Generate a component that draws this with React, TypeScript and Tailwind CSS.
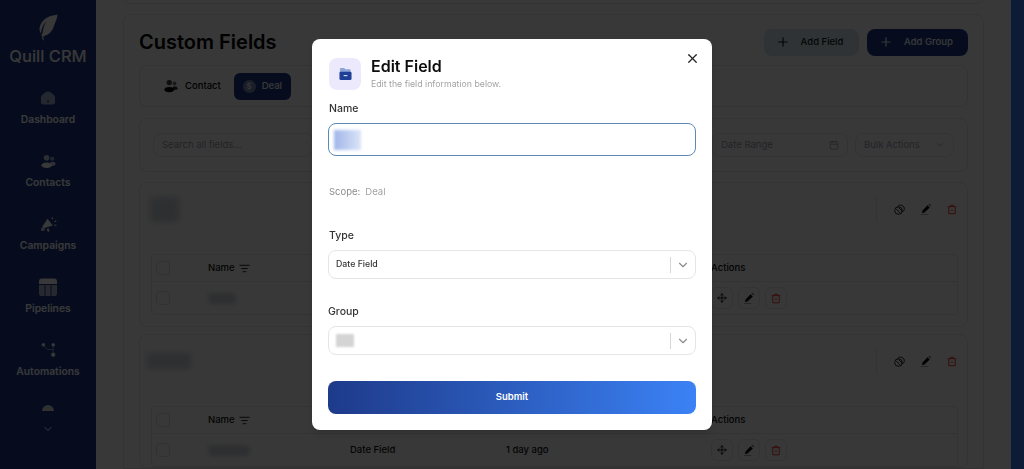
import React from "react";
import { Plus, X, ChevronDown, Calendar, ListFilter, Move } from "lucide-react";

const Feather = () => (
  <svg width="21" height="28" viewBox="0 0 22 28" fill="currentColor">
    <path d="M20.5 1C14 2 8 4 4.500 8.500 1.500 12.500 0.500 17 3 20.500 3.500 16 5.500 11.500 9 7.500 6.500 12 5 17 4.500 21.500 L6 24C8.500 22.500 11 22 13.500 19 15.500 16.500 16.500 14 17.500 10.500 19 8 20 4.500 20.500 1Z" />
    <path d="M3.500 21 L5 28 L6 27.800 L5 21Z" />
  </svg>
);
const Home = () => (
  <svg width="14" height="14" viewBox="0 0 14 14" fill="currentColor" className="opacity-60">
    <path d="M7 0.500C9 0.500 14 4 14 6V11.500A2 2 0 0 1 12 13.500H2A2 2 0 0 1 0 11.500V6C0 4 5 0.500 7 0.500Z" />
    <rect x="6.300" y="9.500" width="1.400" height="1.400" fill="#040b22" />
  </svg>
);
const People = ({ s = 15 }: { s?: number }) => (
  <svg width={s} height={s} viewBox="0 0 16 16" fill="currentColor">
    <circle cx="6" cy="4" r="3" opacity="0.75" />
    <circle cx="12" cy="5" r="2.200" opacity="0.55" />
    <ellipse cx="6" cy="12" rx="5.500" ry="3" />
    <ellipse cx="12.500" cy="10.500" rx="3" ry="2.200" opacity="0.8" />
  </svg>
);
const Megaphone = () => (
  <svg width="17" height="17" viewBox="0 0 18 18" fill="currentColor">
    <path d="M8 3 13.500 10 4 13 2.500 11Z" />
    <circle cx="3" cy="14" r="2" opacity="0.8" />
    <path d="M7 14 9 13 10 16 8.500 17Z" />
    <path d="M12 2 13 1 14 3 13 3.500ZM15 5.500 17 4.500 17.500 5.500 15.500 6.500ZM15 9 17.500 9.500 17.300 10.500 15 10Z" />
  </svg>
);
const Board = () => (
  <svg width="18" height="18" viewBox="0 0 18 18" fill="currentColor">
    <path d="M3 0.500H15A3 3 0 0 1 18 3.500V6H0V3.500A3 3 0 0 1 3 0.500Z" />
    <path d="M0 7H5.500V18H2.500A2.500 2.500 0 0 1 0 15.500ZM6.500 7H11.500V18H6.500ZM12.500 7H18V15.500A2.500 2.500 0 0 1 15.500 18H12.500Z" opacity="0.65" />
  </svg>
);
const Flow = () => (
  <svg width="15" height="16" viewBox="0 0 16 16" fill="currentColor" stroke="currentColor" strokeWidth="0.500">
    <circle cx="2.500" cy="2.500" r="1.600" />
    <circle cx="13" cy="2.500" r="1.600" />
    <circle cx="13" cy="13" r="2" />
    <path d="M3 3.500 7 7.500H13M13 3V12" fill="none" />
  </svg>
);
const Orbit = () => (
  <svg width="11" height="11" viewBox="0 0 16 16" fill="none" stroke="currentColor" strokeWidth="1.200">
    <circle cx="6.500" cy="9.500" r="5.500" />
    <path d="M5 4A5.500 5.500 0 0 1 15 8 5 5 0 0 1 11.500 11.500" />
    <path d="M3 7 9 13M6.500 5 11.500 10" />
  </svg>
);
const Pen = () => (
  <svg width="12" height="12" viewBox="0 0 16 16" fill="currentColor">
    <path d="M10 3 13 6 6 12.500 2.500 13.300 3.500 10Z" />
    <path d="M11 2 12.500 0.800 15 3.300 14 4.800Z" opacity="0.5" />
    <rect x="1" y="14.700" width="10" height="1" opacity="0.4" />
  </svg>
);
const Trash = () => (
  <svg width="10" height="11" viewBox="0 0 14 15" fill="none" stroke="#ef2020" strokeWidth="1.200">
    <path d="M1 3.500H13M5 3.500V1.500H9V3.500M2.500 3.500V13.500H11.500V3.500M5.500 8.500H8.500" />
  </svg>
);
const Folder = () => (
  <svg width="13" height="14" viewBox="0 0 14 14">
    <path d="M1 1.500A1 1 0 0 1 2 0.500H5.500L7 2H11.500A1 1 0 0 1 12.500 3V7H1Z" fill="#8ea3d6" />
    <rect x="0.500" y="4.500" width="13" height="9" rx="1.500" fill="#1e3f98" />
    <rect x="5" y="8.300" width="4" height="1" fill="#ffffff" />
  </svg>
);

const NavItem = ({ icon, label }: { icon: React.ReactNode; label: string }) => (
  <div className="flex h-[63px] shrink-0 flex-col items-center justify-start text-white">
    <div className="flex h-[22px] items-center justify-center">{icon}</div>
    <div className="mt-[2px] text-[10.300px] leading-[16px] font-semibold text-white">{label}</div>
  </div>
);

const Actions = () => (
  <div className="flex items-center">
    <div className="mr-[14px] h-[26px] w-px bg-[#e8e8e8]" />
    <div className="flex items-center gap-[11px] text-black">
      <span className="flex w-[16px] justify-center"><Orbit /></span>
      <span className="flex w-[16px] justify-center"><Pen /></span>
      <span className="flex w-[14px] justify-center"><Trash /></span>
    </div>
  </div>
);

const ActionBox = ({ children }: { children: React.ReactNode }) => (
  <div className="flex size-[22px] items-center justify-center rounded-md border border-[#e8e8e8]">{children}</div>
);

const Table = ({ date, blurW }: { date?: string; blurW: number }) => (
  <div className="mr-[9px] ml-[11px] rounded border border-[#e8e8e8] text-[9.500px] text-[#111]">
    <div className="flex h-[27px] items-center border-b border-[#e8e8e8]">
      <div className="ml-[4px] size-[14px] rounded border border-[#e0e0e0]" />
      <div className="ml-[38px] flex w-[142px] items-center gap-[4px] font-medium">
        Name <ListFilter size={11} />
      </div>
      <div className="ml-[361px] font-medium">Actions</div>
    </div>
    <div className="flex h-[32px] items-center">
      <div className="ml-[4px] size-[14px] rounded border border-[#e0e0e0]" />
      <div className="ml-[38px] w-[142px]">
        <div className="h-[11px] rounded-sm bg-gray-300 blur-[2px]" style={{ width: blurW }} />
      </div>
      <div className="w-[156px] font-medium">{date ? "Date Field" : ""}</div>
      <div className="w-[205px] font-medium">{date}</div>
      <div className="flex items-center gap-[5px] text-black">
        <ActionBox><Move size={10} strokeWidth={2} /></ActionBox>
        <ActionBox><Pen /></ActionBox>
        <ActionBox><Trash /></ActionBox>
      </div>
    </div>
  </div>
);

const Filter = ({ children, cls }: { children: React.ReactNode; cls: string }) => (
  <div className={`flex h-[24px] items-center rounded-lg border border-[#e8e8e8] px-2 text-[9.500px] text-gray-400 ${cls}`}>{children}</div>
);

const SelectBox = ({ children }: { children: React.ReactNode }) => (
  <div className="flex h-[29px] items-center rounded-lg border border-[#e5e5e5] bg-white">
    <div className="flex-1 pl-[7px] text-[8.750px] font-medium text-[#333]">{children}</div>
    <div className="h-[16px] w-px bg-[#d6d6d6]" />
    <div className="flex w-[24px] justify-center text-[#8c8c8c]">
      <ChevronDown size={14} />
    </div>
  </div>
);

export default function App() {
  return (
    <div className="relative flex h-screen w-full overflow-hidden bg-white font-['Inter',sans-serif]">
      <aside className="flex w-[96px] shrink-0 flex-col items-center overflow-hidden bg-[#1e3a8a] pt-[13px] text-white">
        <Feather />
        <div className="mt-[6px] text-[16.500px] leading-[18px] font-medium text-white">Quill CRM</div>
        <div className="mt-[22px] flex w-full flex-col">
          <NavItem icon={<Home />} label="Dashboard" />
          <NavItem icon={<People />} label="Contacts" />
          <NavItem icon={<Megaphone />} label="Campaigns" />
          <NavItem icon={<Board />} label="Pipelines" />
          <NavItem icon={<Flow />} label="Automations" />
        </div>
        <div className="mt-[3px] h-[6px] w-[12px] rounded-t-full bg-white/80" />
        <ChevronDown size={12} className="mt-[12px] text-white" />
      </aside>

      <main className="flex min-w-0 flex-1 flex-col overflow-hidden px-[27px]">
        <div className="-mt-[10px] h-[14px] shrink-0 rounded-lg border border-[#e8e8e8]" />
        <section className="mt-[10px] flex flex-1 flex-col rounded-t-lg border border-[#e8e8e8] px-[15px] pt-[13px]">
          <div className="flex h-[28px] items-center justify-between">
            <h1 className="text-[20px] font-semibold text-black">Custom Fields</h1>
            <div className="flex gap-2">
              <button className="flex h-[27px] w-[95px] items-center justify-center gap-[11px] rounded-lg bg-[#d6e8f5] pr-[4px] text-[9.500px] font-medium text-[#111]">
                <Plus size={14} /> Add Field
              </button>
              <button className="flex h-[27px] w-[101px] items-center justify-center gap-[11px] rounded-lg bg-[#1e3a8a] pr-[3px] text-[9.500px] font-medium text-white">
                <Plus size={14} /> Add Group
              </button>
            </div>
          </div>

          <div className="mt-[9px] flex h-[42px] items-center gap-[13px] rounded-lg border border-[#e8e8e8] pl-[24px]">
            <div className="flex items-center gap-[7px] text-[9.500px] font-medium text-black">
              <People s={14} /> Contact
            </div>
            <div className="flex h-[27px] w-[57px] items-center justify-center gap-[6px] rounded-md bg-[#1e3a8a] text-[9.500px] font-medium text-white">
              <span className="flex size-[13px] items-center justify-center rounded-full bg-white/40 text-[8px]">$</span>
              Deal
            </div>
          </div>

          <div className="mt-[11px] flex h-[54px] shrink-0 items-center justify-between rounded-lg border border-[#e8e8e8] pr-[13px] pl-[13px]">
            <Filter cls="w-[160px]">Search all fields...</Filter>
            <div className="flex gap-[7px]">
              <Filter cls="w-[136px] justify-between">Date Range <Calendar size={10} /></Filter>
              <Filter cls="w-[99px] justify-between">Bulk Actions <ChevronDown size={10} /></Filter>
            </div>
          </div>

          <div className="mt-[10px] h-[145px] shrink-0 rounded-lg border border-[#e8e8e8]">
            <div className="flex h-[52px] items-center justify-between pr-[8px] pl-[10px]">
              <div className="h-[25px] w-[29px] bg-gray-300 blur-[3px]" />
              <Actions />
            </div>
            <div className="mt-[19px]"><Table blurW={28} /></div>
          </div>

          <div className="mt-[7px] flex-1 rounded-lg border border-[#e8e8e8]">
            <div className="flex h-[52px] items-center justify-between pr-[8px] pl-[7px]">
              <div className="h-[16px] w-[44px] bg-gray-300 blur-[3px]" />
              <Actions />
            </div>
            <div className="mt-[19px]"><Table blurW={42} date="1 day ago" /></div>
          </div>
        </section>
      </main>

      <div className="w-[13px] shrink-0 bg-[#3b82f6]" />

      <div className="absolute inset-0 bg-black/[0.78] backdrop-blur-[0.5px]" />

      <div className="absolute top-[39px] left-[312px] flex h-[391px] w-[400px] flex-col rounded-lg bg-white px-[16px] pt-[18px] shadow-md">
        <button className="absolute top-[12px] right-[12px] text-[#222]">
          <X size={15} />
        </button>
        <div className="flex items-center gap-[10px] pl-[1px]">
          <div className="flex size-[32px] items-center justify-center rounded-lg bg-[#ebe9fb]">
            <Folder />
          </div>
          <div>
            <div className="text-[16px] leading-[19px] font-semibold text-[#0d0d0d]">Edit Field</div>
            <div className="mt-[2px] text-[8.750px] leading-[13px] text-[#a3a3a3]">Edit the field information below.</div>
          </div>
        </div>
        <label className="mt-[10px] pl-[1px] text-[10.500px] leading-[16px] font-medium text-[#333]">Name</label>
        <div className="mt-[6px] flex h-[33px] items-center rounded-lg border-[1.500px] border-[#5b8ab5] px-[5px]">
          <div className="h-[20px] w-[27px] bg-linear-to-r from-[#a0b5e8] to-[#dbe4f8] blur-[1.500px]" />
        </div>
        <div className="mt-[29px] flex items-center gap-[5px] pl-[1px] text-[9.500px] leading-[14px]">
          <span className="text-[#8c8c8c]">Scope:</span>
          <span className="text-[#a3a3a3]">Deal</span>
        </div>
        <label className="mt-[29px] pl-[1px] text-[10.500px] leading-[16px] font-medium text-[#333]">Type</label>
        <div className="mt-[6px]"><SelectBox>Date Field</SelectBox></div>
        <label className="mt-[25px] text-[10.500px] leading-[16px] font-medium text-[#333]">Group</label>
        <div className="mt-[6px]">
          <SelectBox><div className="h-[13px] w-[18px] bg-[#d4d4d4] blur-[1px]" /></SelectBox>
        </div>
        <button className="mt-[26px] h-[33px] rounded-lg bg-linear-to-r from-[#1e3a8a] to-[#3b82f6] text-[9.500px] font-semibold text-white">
          Submit
        </button>
      </div>
    </div>
  );
}
